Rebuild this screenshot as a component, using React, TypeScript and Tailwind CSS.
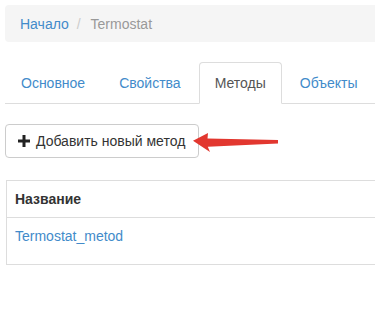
import React from "react";

function PlusIcon() {
  return (
    <svg width="12" height="12" viewBox="0 0 12 12" className="shrink-0">
      <path d="M4.5 0h3v4.5H12v3H7.5V12h-3V7.5H0v-3h4.5z" fill="#222" />
    </svg>
  );
}

function Arrow() {
  return (
    <svg
      className="absolute left-[190px] top-[130px]"
      width="92"
      height="26"
      viewBox="0 0 92 26"
    >
      <path
        d="M3 10.7 L18 3 L17.5 8.6 L88 10 L88 13.6 L17.8 16.8 L20 22 Z"
        fill="#e2372f"
      />
    </svg>
  );
}

export default function App() {
  const tabs = ["Основное", "Свойства", "Методы", "Объекты"];
  return (
    <div
      className="relative w-[375px] h-[324px] overflow-hidden bg-white text-[14px] leading-[20px] text-[#333]"
      style={{ fontFamily: '"Liberation Sans", Arial, sans-serif' }}
    >
      <div className="w-[400px] pl-[5px] pt-[5px]">
        <div className="flex h-[37px] items-center rounded-[4px] bg-[#f5f5f5] px-[15px]">
          <span className="text-[#428bca]">Начало</span>
          <span className="pl-[8px] pr-[6px] text-[#ccc]">/&nbsp;</span>
          <span className="text-[#999]">Termostat</span>
        </div>

        <div className="mt-[20px] flex border-b border-[#ddd]">
          {tabs.map((t) => {
            const active = t === "Методы";
            return (
              <div
                key={t}
                className={
                  active
                    ? "-mb-px mr-[2px] rounded-t-[4px] border border-[#ddd] border-b-transparent bg-white px-[15px] py-[10px] text-[#555]"
                    : "-mb-px mr-[2px] rounded-t-[4px] border border-transparent px-[15px] py-[10px] text-[#428bca]"
                }
              >
                {t}
              </div>
            );
          })}
        </div>

        <div className="mt-[20px] flex">
          <div className="flex h-[34px] items-center gap-[6px] rounded-[4px] border border-[#ccc] bg-white pl-[12px] pr-[13px] text-[#333]">
            <PlusIcon />
            <span>Добавить новый метод</span>
          </div>
        </div>

        <div className="ml-[1px] mt-[22px] border border-[#ddd]">
          <div className="border-b border-[#ddd] px-[8px] py-[8px] font-bold text-[#333]">
            Название
          </div>
          <div className="h-[46px] px-[8px] pt-[8px] text-[#428bca]">
            Termostat_metod
          </div>
        </div>
      </div>
      <Arrow />
    </div>
  );
}
